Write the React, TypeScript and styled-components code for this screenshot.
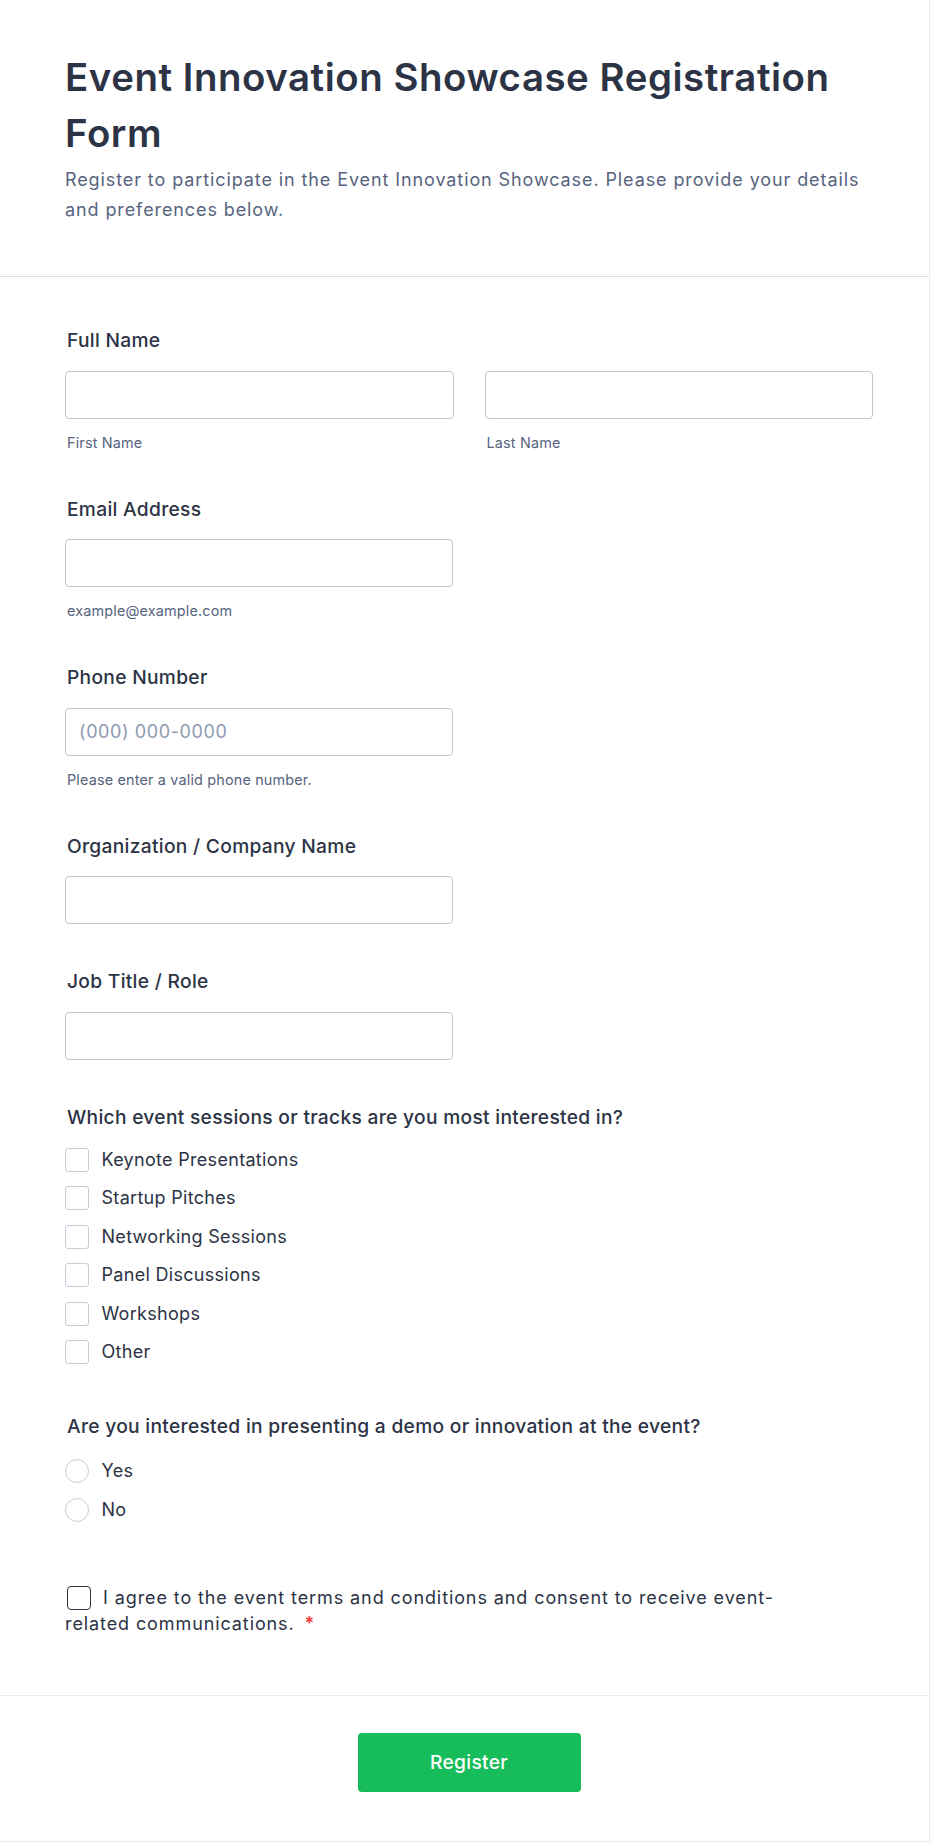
import styled, { createGlobalStyle } from "styled-components";

const colors = {
  text: "#2c3345",
  muted: "#57647e",
  placeholder: "#8c9ab0",
  inputBorder: "#c0c5d4",
  boxBorder: "#c6ccd9",
  divider: "#dcdfe8",
  dividerLight: "#e9ebf1",
  green: "#18bd5b",
  red: "#f23a3c",
};

const GlobalStyle = createGlobalStyle`
  * {
    box-sizing: border-box;
  }
  body {
    margin: 0;
    background: #ffffff;
    font-family: Inter, "Noto Sans", "Liberation Sans", sans-serif;
    color: ${colors.text};
  }
`;

const Form = styled.form`
  width: 930px;
  background: #ffffff;
  border-right: 1px solid ${colors.dividerLight};
  border-bottom: 1px solid ${colors.dividerLight};
`;

const Header = styled.header`
  padding: 49px 56px 51px 65px;
  border-bottom: 1px solid ${colors.divider};
`;

const Title = styled.h1`
  margin: 0;
  font-size: 38.4px;
  line-height: 56px;
  font-weight: 600;
  letter-spacing: 0.55px;
  color: ${colors.text};
`;

const Subtitle = styled.p`
  margin: 4px 0 0;
  font-size: 18px;
  line-height: 30px;
  letter-spacing: 0.9px;
  color: ${colors.muted};
`;

const Body = styled.div`
  display: flex;
  flex-direction: column;
  gap: 45px;
  padding: 51px 56px 58px 65px;
`;

const Field = styled.div`
  display: flex;
  flex-direction: column;
`;

const FieldLabel = styled.label`
  font-size: 19.2px;
  line-height: 25px;
  font-weight: 500;
  letter-spacing: 0.3px;
  color: ${colors.text};
  padding-left: 2px;
  margin-bottom: 17.5px;
`;

const NameGrid = styled.div`
  display: grid;
  grid-template-columns: 1fr 1fr;
  column-gap: 31px;
`;

const Slot = styled.div<{ $width?: number }>`
  display: flex;
  flex-direction: column;
  width: ${(p) => (p.$width ? `${p.$width}px` : "auto")};
`;

const TextInput = styled.input`
  width: 100%;
  height: 48px;
  padding: 0 13px;
  border: 1px solid ${colors.inputBorder};
  border-radius: 4px;
  background: #ffffff;
  font-family: inherit;
  font-size: 18px;
  letter-spacing: 0.6px;
  color: ${colors.text};
  outline: none;
  &::placeholder {
    color: ${colors.placeholder};
  }
`;

const SubLabel = styled.span`
  margin-top: 15px;
  padding-left: 2px;
  font-size: 14.4px;
  line-height: 18px;
  letter-spacing: 0.17px;
  color: ${colors.muted};
`;

const QuestionLabel = styled(FieldLabel)<{ $gap: number }>`
  margin-bottom: ${(p) => p.$gap}px;
`;

const OptionList = styled.div<{ $gap: number; $tail: number }>`
  display: flex;
  flex-direction: column;
  gap: ${(p) => p.$gap}px;
  padding-bottom: ${(p) => p.$tail}px;
`;

const OptionRow = styled.label`
  display: flex;
  align-items: center;
  gap: 12.5px;
  font-size: 18px;
  line-height: 24px;
  letter-spacing: 0.3px;
  color: ${colors.text};
`;

const Box = styled.span<{ $round?: boolean }>`
  width: 24px;
  height: 24px;
  flex: none;
  border: 1px solid ${colors.boxBorder};
  border-radius: ${(p) => (p.$round ? "50%" : "3px")};
  background: #ffffff;
`;

const Agreement = styled.p`
  margin: 16px 0 0;
  max-width: 740px;
  font-size: 18px;
  line-height: 26px;
  letter-spacing: 0.9px;
  color: ${colors.text};
`;

const AgreeBox = styled.span`
  display: inline-block;
  width: 24px;
  height: 24px;
  margin: 0 12px 0 2px;
  vertical-align: -6px;
  border: 1.5px solid ${colors.text};
  border-radius: 4px;
`;

const Terms = styled.span``;

const Required = styled.span`
  color: ${colors.red};
  margin-left: 10px;
  font-weight: 600;
`;

const Footer = styled.footer`
  display: flex;
  justify-content: center;
  padding: 37px 56px 49px 65px;
  border-top: 1px solid ${colors.dividerLight};
`;

const SubmitButton = styled.button`
  width: 223px;
  height: 59px;
  border: none;
  border-radius: 4px;
  background: ${colors.green};
  color: #ffffff;
  font-family: inherit;
  font-size: 19.2px;
  font-weight: 500;
  letter-spacing: 0.3px;
  cursor: pointer;
`;

const sessions = [
  "Keynote Presentations",
  "Startup Pitches",
  "Networking Sessions",
  "Panel Discussions",
  "Workshops",
  "Other",
];

const singleFields = [
  { label: "Email Address", hint: "example@example.com" },
  {
    label: "Phone Number",
    hint: "Please enter a valid phone number.",
    placeholder: "(000) 000-0000",
  },
  { label: "Organization / Company Name" },
  { label: "Job Title / Role" },
];

export default function App() {
  return (
    <>
      <GlobalStyle />
      <Form onSubmit={(e) => e.preventDefault()}>
        <Header>
          <Title>Event Innovation Showcase Registration Form</Title>
          <Subtitle>
            Register to participate in the Event Innovation Showcase. Please
            provide your details and preferences below.
          </Subtitle>
        </Header>

        <Body>
          <Field>
            <FieldLabel>Full Name</FieldLabel>
            <NameGrid>
              <Slot>
                <TextInput type="text" />
                <SubLabel>First Name</SubLabel>
              </Slot>
              <Slot>
                <TextInput type="text" />
                <SubLabel>Last Name</SubLabel>
              </Slot>
            </NameGrid>
          </Field>

          {singleFields.map((f) => (
            <Field key={f.label}>
              <FieldLabel>{f.label}</FieldLabel>
              <Slot $width={388}>
                <TextInput type="text" placeholder={f.placeholder} />
                {f.hint && <SubLabel>{f.hint}</SubLabel>}
              </Slot>
            </Field>
          ))}

          <Field>
            <QuestionLabel $gap={18.5}>
              Which event sessions or tracks are you most interested in?
            </QuestionLabel>
            <OptionList $gap={14.4} $tail={5.5}>
              {sessions.map((s) => (
                <OptionRow key={s}>
                  <Box />
                  {s}
                </OptionRow>
              ))}
            </OptionList>
          </Field>

          <Field>
            <QuestionLabel $gap={19.5}>
              Are you interested in presenting a demo or innovation at the
              event?
            </QuestionLabel>
            <OptionList $gap={14.7} $tail={2}>
              {["Yes", "No"].map((s) => (
                <OptionRow key={s}>
                  <Box $round />
                  {s}
                </OptionRow>
              ))}
            </OptionList>
          </Field>

          <Agreement>
            <AgreeBox />
            <Terms>
              I agree to the event terms and conditions and consent to receive
              event-
            </Terms>
            <Terms>related communications.</Terms>
            <Required>*</Required>
          </Agreement>
        </Body>

        <Footer>
          <SubmitButton type="submit">Register</SubmitButton>
        </Footer>
      </Form>
    </>
  );
}
